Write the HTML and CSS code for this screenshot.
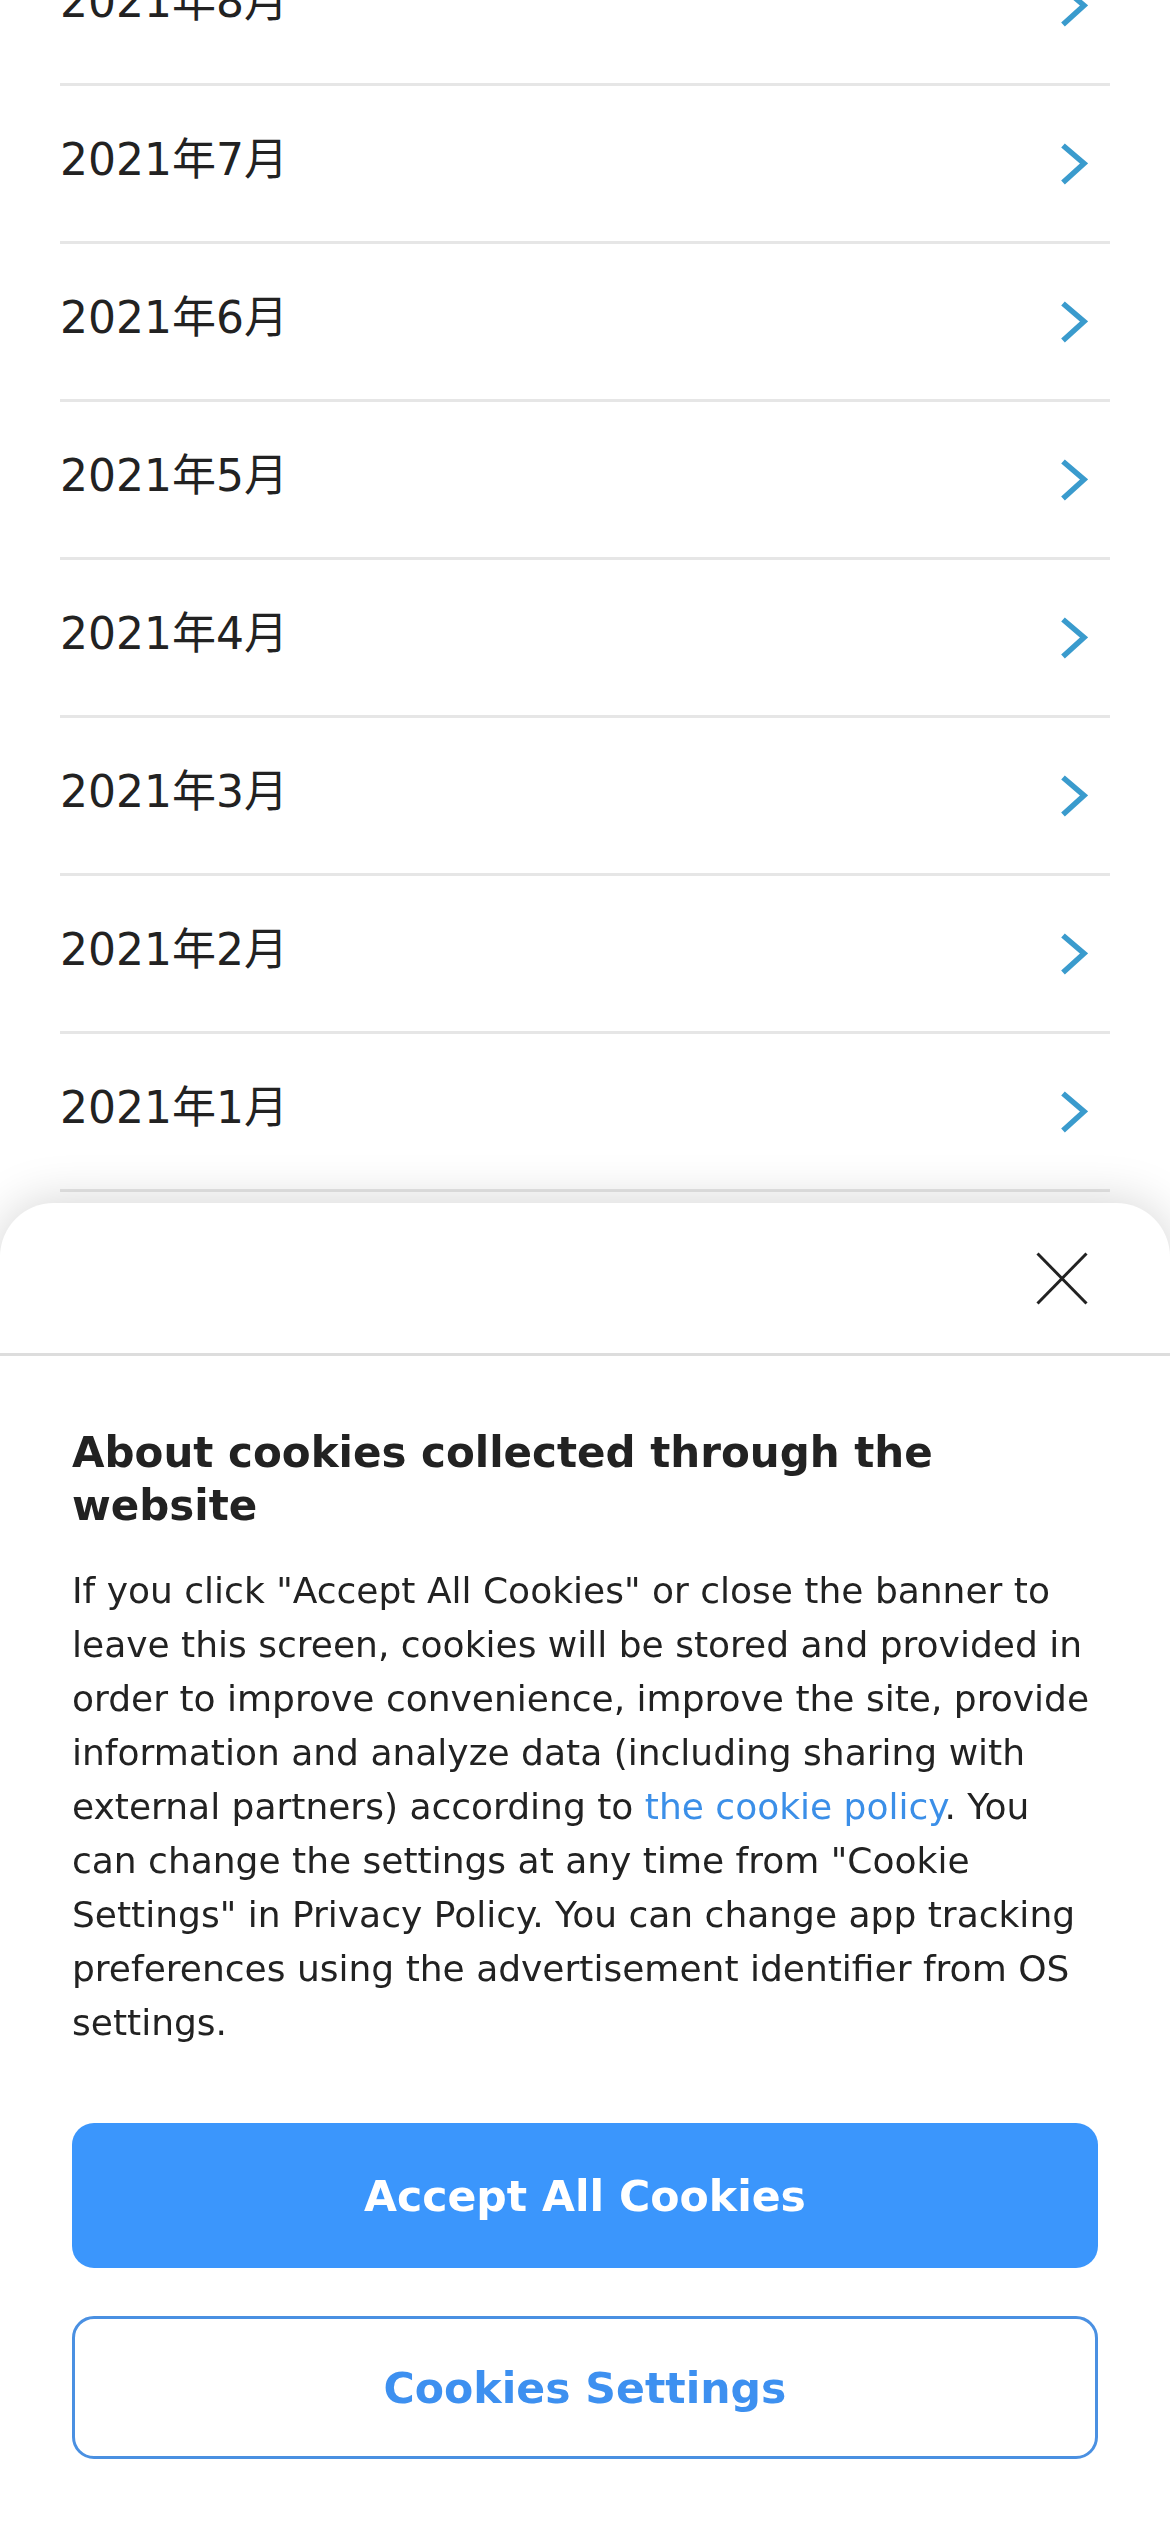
FILE: index.html
```html
<!DOCTYPE html>
<html lang="ja">
<head>
<meta charset="utf-8">
<title>Archive</title>
<link rel="stylesheet" href="styles.css">
</head>
<body>
<ul class="archive">
  <li class="row"><span class="label">2021年8月</span><svg class="chev" viewBox="0 0 30 44" width="30" height="44"><polyline points="5,3.5 26,21.5 5,40.5"/></svg></li>
  <li class="row"><span class="label">2021年7月</span><svg class="chev" viewBox="0 0 30 44" width="30" height="44"><polyline points="5,3.5 26,21.5 5,40.5"/></svg></li>
  <li class="row"><span class="label">2021年6月</span><svg class="chev" viewBox="0 0 30 44" width="30" height="44"><polyline points="5,3.5 26,21.5 5,40.5"/></svg></li>
  <li class="row"><span class="label">2021年5月</span><svg class="chev" viewBox="0 0 30 44" width="30" height="44"><polyline points="5,3.5 26,21.5 5,40.5"/></svg></li>
  <li class="row"><span class="label">2021年4月</span><svg class="chev" viewBox="0 0 30 44" width="30" height="44"><polyline points="5,3.5 26,21.5 5,40.5"/></svg></li>
  <li class="row"><span class="label">2021年3月</span><svg class="chev" viewBox="0 0 30 44" width="30" height="44"><polyline points="5,3.5 26,21.5 5,40.5"/></svg></li>
  <li class="row"><span class="label">2021年2月</span><svg class="chev" viewBox="0 0 30 44" width="30" height="44"><polyline points="5,3.5 26,21.5 5,40.5"/></svg></li>
  <li class="row"><span class="label">2021年1月</span><svg class="chev" viewBox="0 0 30 44" width="30" height="44"><polyline points="5,3.5 26,21.5 5,40.5"/></svg></li>
  <li class="row"><span class="label">2020年12月</span><svg class="chev" viewBox="0 0 30 44" width="30" height="44"><polyline points="5,3.5 26,21.5 5,40.5"/></svg></li>
  <li class="row"><span class="label">2020年11月</span><svg class="chev" viewBox="0 0 30 44" width="30" height="44"><polyline points="5,3.5 26,21.5 5,40.5"/></svg></li>
</ul>

<div class="banner">
  <div class="banner-head">
    <button class="close" aria-label="Close">
      <svg viewBox="0 0 52 53" width="52" height="53"><line x1="1.5" y1="1.5" x2="50.5" y2="51.5"/><line x1="50.5" y1="1.5" x2="1.5" y2="51.5"/></svg>
    </button>
  </div>
  <div class="banner-body">
    <h2 class="title">About cookies collected through the website</h2>
    <p class="desc">If you click "Accept All Cookies" or close the banner to leave this screen, cookies will be stored and provided in order to improve convenience, improve the site, provide information and analyze data (including sharing with external partners) according to <a class="link" href="#">the cookie policy</a>. You can change the settings at any time from "Cookie Settings" in Privacy Policy. You can change app tracking preferences using the advertisement identifier from OS settings.</p>
    <div class="actions">
      <button class="btn btn-primary">Accept All Cookies</button>
      <button class="btn btn-outline">Cookies Settings</button>
    </div>
  </div>
</div>
</body>
</html>
```

FILE: styles.css
```css
html, body {
  margin: 0;
  padding: 0;
  background: #ffffff;
}
body {
  width: 1170px;
  height: 2532px;
  overflow: hidden;
  font-family: "DejaVu Sans", "Noto Sans CJK JP", sans-serif;
  color: #222222;
}
.archive {
  list-style: none;
  margin: -72px 60px 0 60px;
  padding: 0;
}
.row {
  height: 155px;
  border-bottom: 3px solid #e6e6e6;
  display: flex;
  align-items: center;
  justify-content: space-between;
}
.label {
  font-size: 44px;
  line-height: 60px;
  padding-bottom: 8px;
  color: #222222;
}
.chev {
  margin-right: 22px;
  flex: none;
}
.chev polyline {
  fill: none;
  stroke: #3a9bcd;
  stroke-width: 5.5;
  stroke-linecap: butt;
  stroke-linejoin: miter;
}
.banner {
  position: fixed;
  left: 0;
  right: 0;
  bottom: 0;
  background: #ffffff;
  border-radius: 54px 54px 0 0;
  box-shadow: 0 0 50px rgba(0, 0, 0, 0.18);
}
.banner-head {
  height: 150px;
  border-bottom: 3px solid #dddddd;
  display: flex;
  align-items: center;
  justify-content: flex-end;
  padding-right: 82px;
}
.close {
  border: none;
  background: transparent;
  padding: 0;
  margin: 0;
  width: 52px;
  height: 53px;
  display: block;
}
.close svg {
  display: block;
}
.close line {
  stroke: #222222;
  stroke-width: 3;
}
.banner-body {
  padding: 70px 72px 73px 72px;
}
.title {
  margin: 0;
  font-size: 42px;
  line-height: 53px;
  font-weight: bold;
  color: #222222;
}
.desc {
  margin: 32px 0 0 0;
  font-size: 36px;
  line-height: 54px;
  color: #222222;
}
.link {
  color: #3b8fe8;
  text-decoration: none;
}
.actions {
  margin-top: 73px;
  display: flex;
  flex-direction: column;
  gap: 48px;
}
.btn {
  width: 100%;
  font-family: "DejaVu Sans", sans-serif;
  font-size: 42.6px;
  font-weight: bold;
  border-radius: 22px;
  margin: 0;
  padding: 0;
}
.btn-primary {
  height: 145px;
  background: #3b96fc;
  color: #ffffff;
  border: none;
}
.btn-outline {
  height: 143px;
  background: #ffffff;
  color: #3d90f0;
  border: 3px solid #4a90e2;
}
```
